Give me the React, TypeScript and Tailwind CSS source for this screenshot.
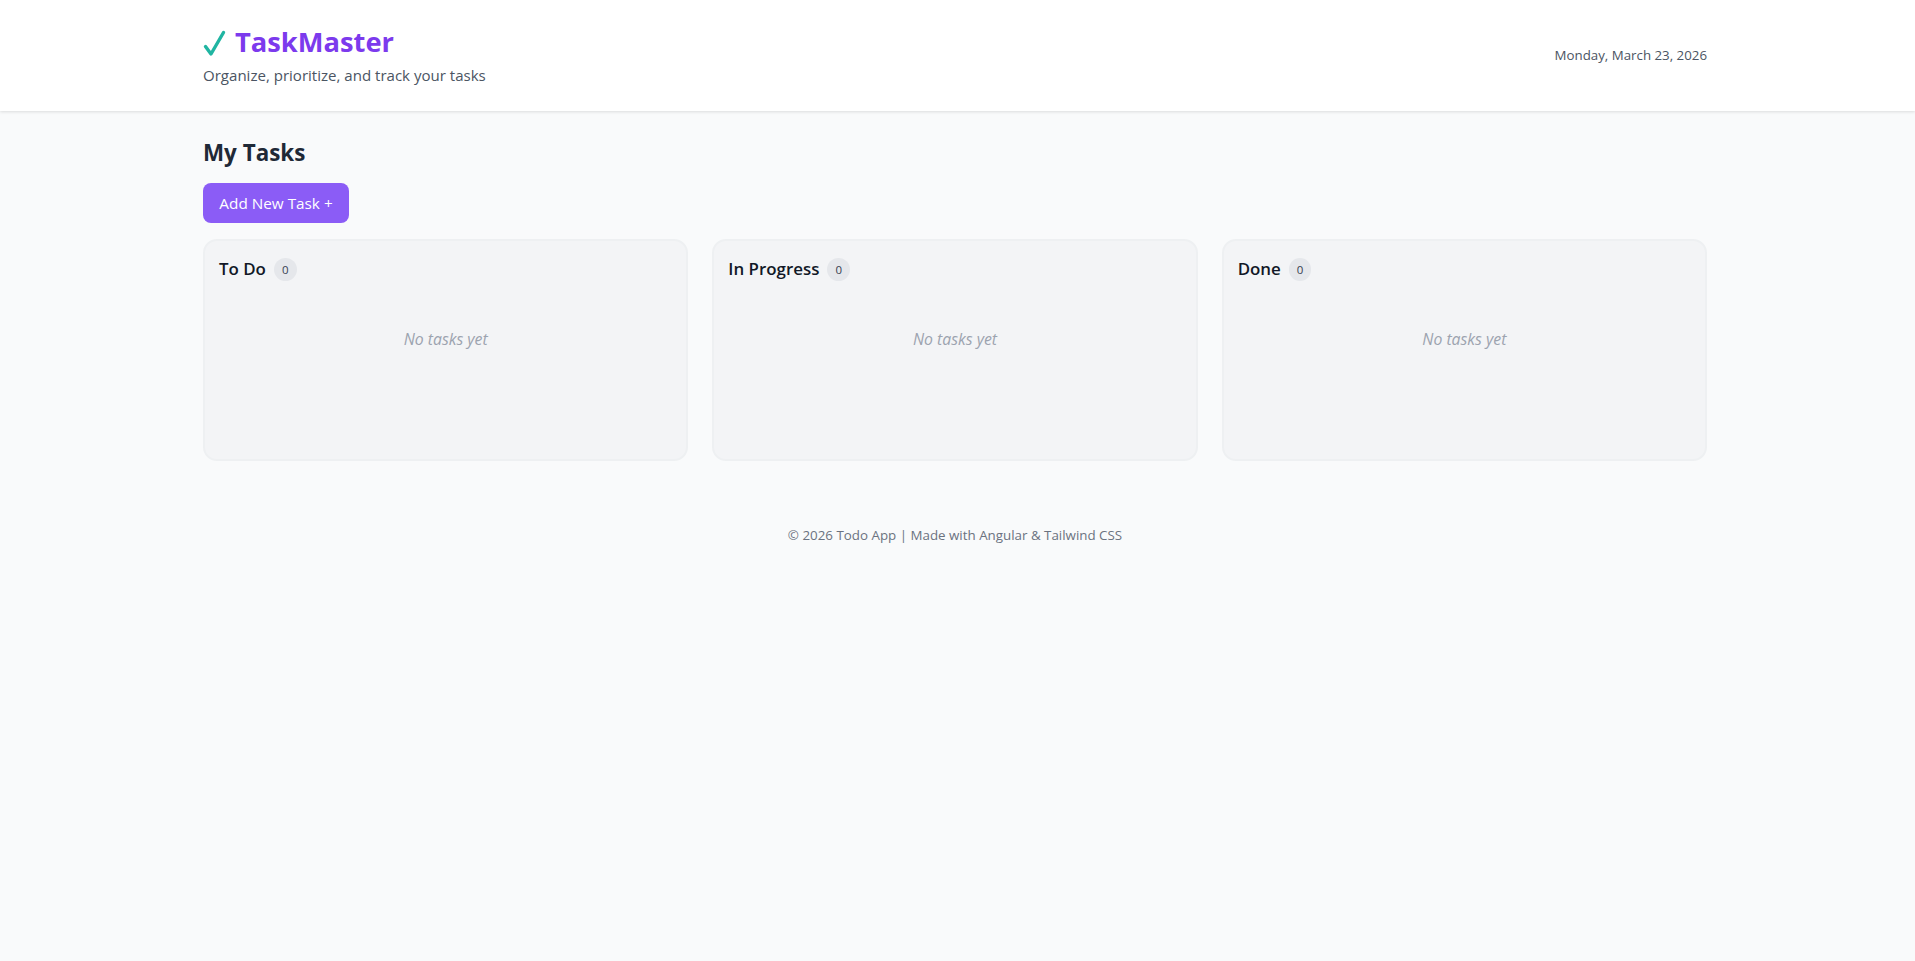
export default function App() {
  const cols = ["To Do", "In Progress", "Done"];
  return (
    <div className="min-h-screen bg-[#f9fafb] font-['Open_Sans',sans-serif] text-[#1f2937]">
      <header className="h-[111px] bg-white pr-[5px] shadow-[0_1px_3px_rgba(0,0,0,0.12)]">
        <div className="mx-auto flex h-full w-[1504px] items-center justify-between">
          <div className="pb-px">
            <h1 className="flex items-center gap-[7px] text-[27.3px] leading-9 font-bold text-[#7c3aed]">
              <svg className="h-9 w-[25px]" viewBox="0 0 25 36" fill="none" stroke="#20b5a2" strokeWidth="3.4" strokeLinecap="round" strokeLinejoin="round">
                <path d="M2.5 22.5 L8 30 L20.5 8.5" />
              </svg>
              <span>TaskMaster</span>
            </h1>
            <p className="mt-[3px] text-[15.06px] leading-6 text-[#4b5563]">Organize, prioritize, and track your tasks</p>
          </div>
          <div className="pb-[2px] text-[13.3px] leading-5 text-[#4b5563]">Monday, March 23, 2026</div>
        </div>
      </header>
      <div className="pr-[5px]">
        <main className="mx-auto w-[1504px] pt-[26px]">
          <h2 className="text-[22.4px] leading-8 font-bold text-[#1f2937]">My Tasks</h2>
          <button className="mt-[14px] h-10 w-[146px] rounded-lg bg-[#8b5cf6] text-[15.3px] text-white">Add New Task +</button>
          <div className="mt-4 grid grid-cols-3 gap-6">
            {cols.map((c) => (
              <section key={c} className="h-[222px] rounded-[14px] border-2 border-[#eef0f2] bg-[#f3f4f6] p-[14px]">
                <div className="flex items-center gap-2">
                  <h3 className="text-[16.9px] leading-7 font-semibold text-[#111827]">{c}</h3>
                  <span className="rounded-full bg-[#e5e7eb] px-2 text-[11.5px] leading-[23px] text-[#374151]">0</span>
                </div>
                <p className="mt-[37px] py-2 text-center text-[15.8px] italic text-[#9ca3af]">No tasks yet</p>
              </section>
            ))}
          </div>
          <footer className="mt-[56px] py-2 text-center text-[13.35px] leading-5 text-[#6b7280]">© 2026 Todo App | Made with Angular &amp; Tailwind CSS</footer>
        </main>
      </div>
    </div>
  );
}
